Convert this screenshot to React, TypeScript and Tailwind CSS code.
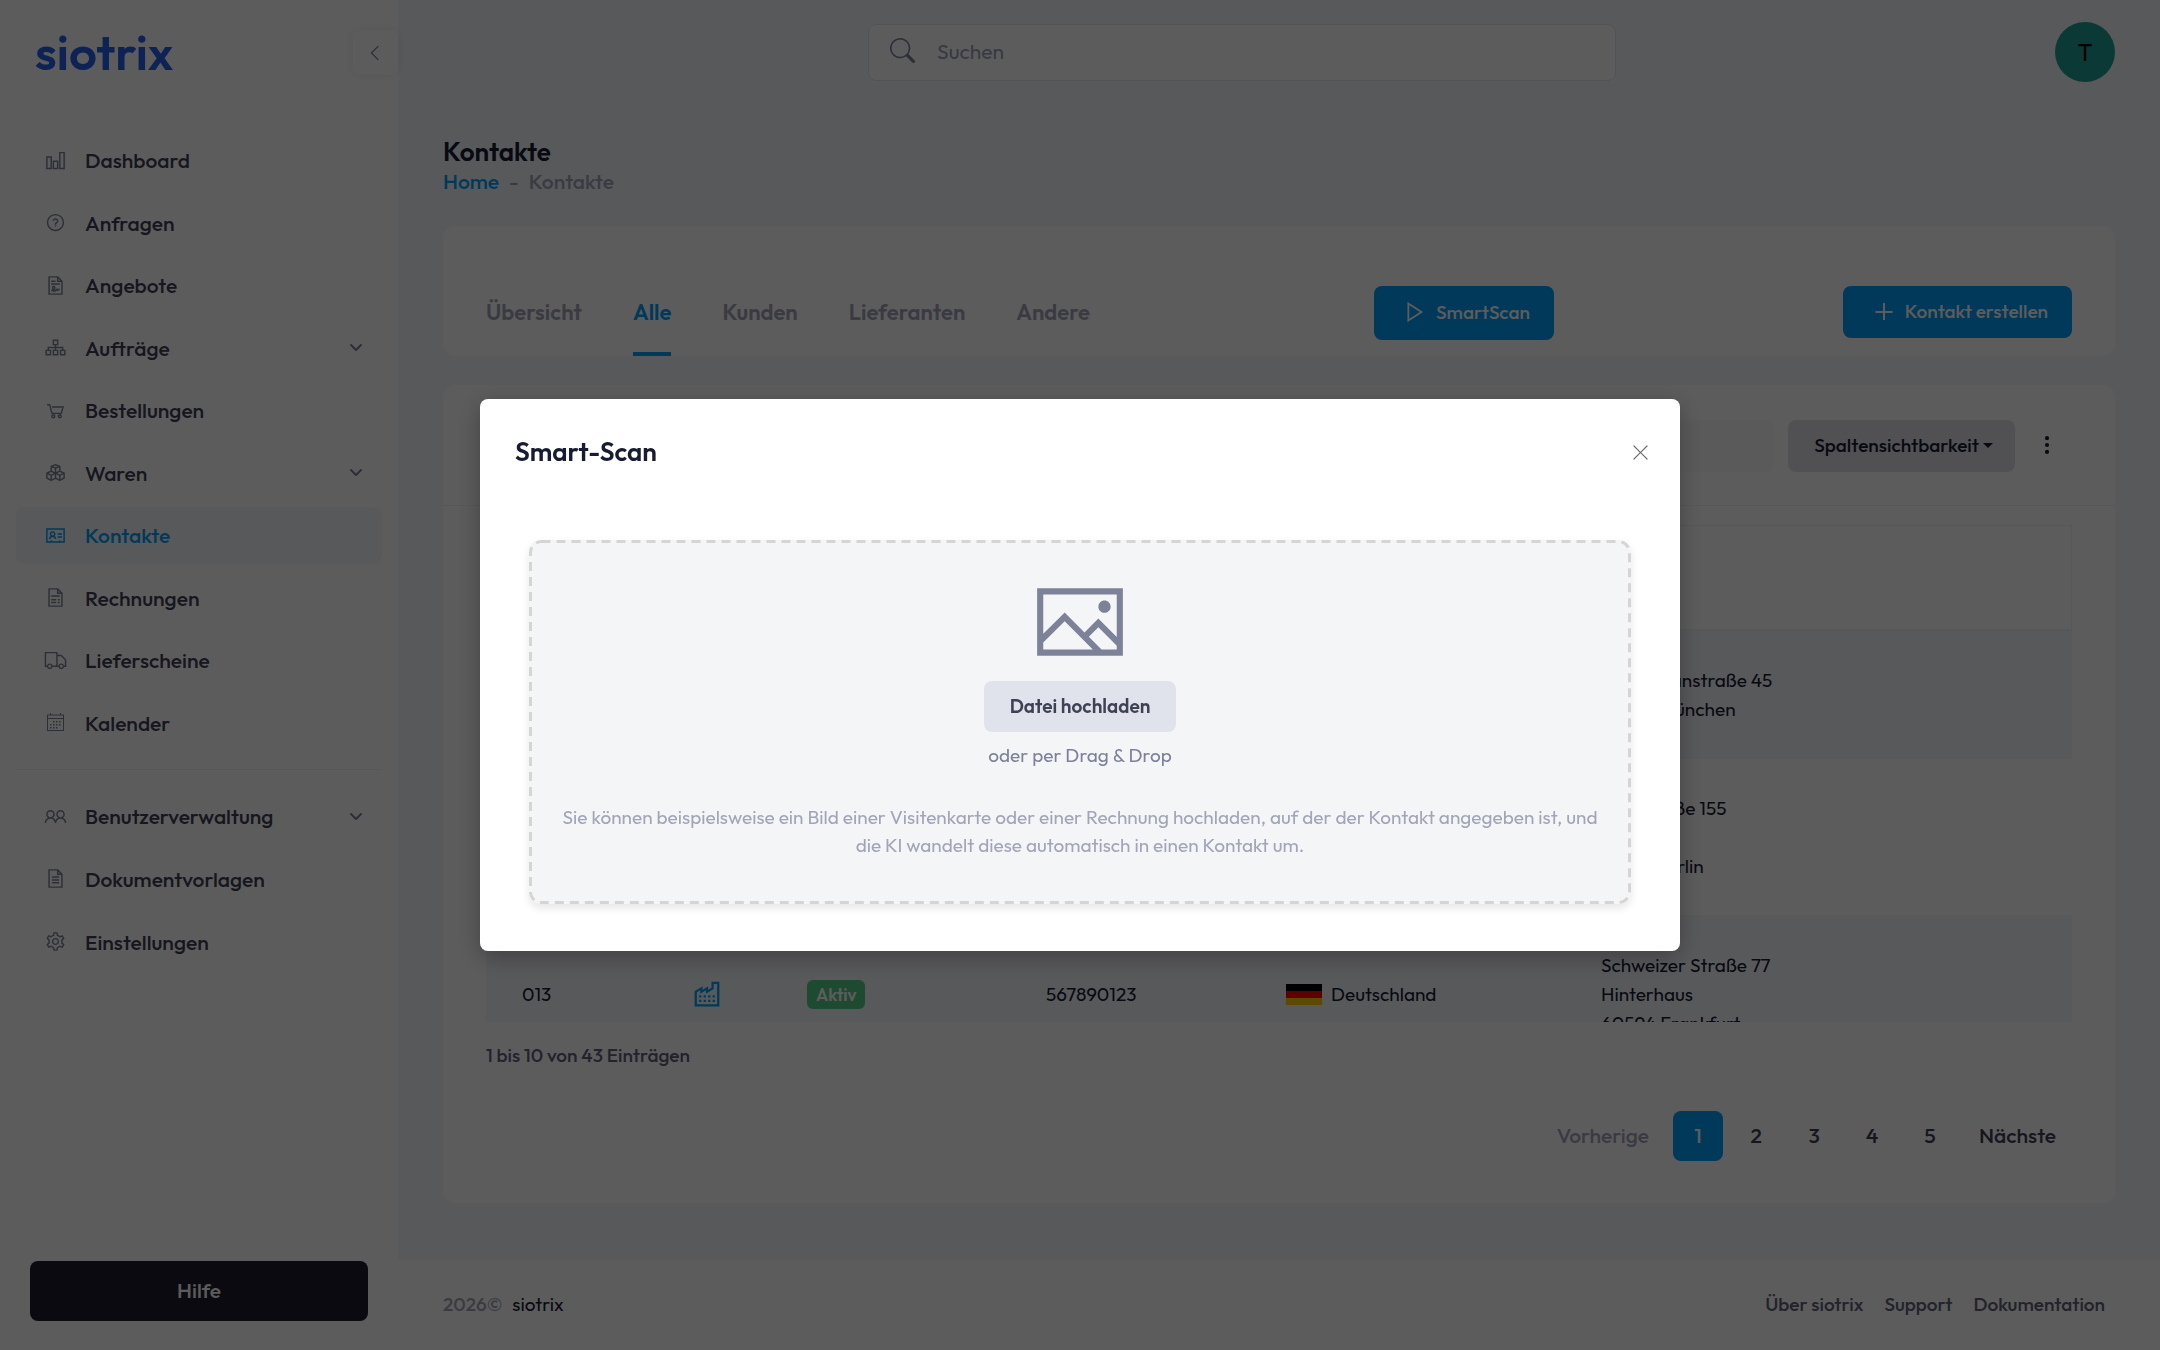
import type { ComponentType, ReactNode } from "react";
import { BsSearch, BsThreeDotsVertical, BsXLg } from "react-icons/bs";
import {
  LiaAddressCard,
  LiaAngleLeftSolid,
  LiaChartBarSolid,
  LiaCogSolid,
  LiaCubesSolid,
  LiaFileAltSolid,
  LiaFileContractSolid,
  LiaFileInvoiceSolid,
  LiaImage,
  LiaIndustrySolid,
  LiaPlaySolid,
  LiaQuestionCircle,
  LiaShoppingCartSolid,
  LiaSitemapSolid,
  LiaTruckSolid,
  LiaUserFriendsSolid,
} from "react-icons/lia";

type IconType = ComponentType<{ className?: string }>;
type Item = { label: string; icon: IconType; expandable?: boolean; active?: boolean };

function CalendarIcon({ className }: { className?: string }) {
  return (
    <svg viewBox="0 0 23 23" className={className} fill="currentColor">
      <path d="M6 2h1v1.500h9V2h1v1.500h3V20H3V3.500h3zM4 4.500V7h15V4.500zM4 8v11h15V8z" fillRule="evenodd" />
      <path d="M9 10h1.500v1.500H9zM12 10h1.500v1.500H12zM15 10h1.500v1.500H15zM6 13h1.500v1.500H6zM9 13h1.500v1.500H9zM12 13h1.500v1.500H12zM15 13h1.500v1.500H15zM6 16h1.500v1.500H6zM9 16h1.500v1.500H9zM12 16h1.500v1.500H12z" />
    </svg>
  );
}

const mainItems: Item[] = [
  { label: "Dashboard", icon: LiaChartBarSolid },
  { label: "Anfragen", icon: LiaQuestionCircle },
  { label: "Angebote", icon: LiaFileContractSolid },
  { label: "Aufträge", icon: LiaSitemapSolid, expandable: true },
  { label: "Bestellungen", icon: LiaShoppingCartSolid },
  { label: "Waren", icon: LiaCubesSolid, expandable: true },
  { label: "Kontakte", icon: LiaAddressCard, active: true },
  { label: "Rechnungen", icon: LiaFileInvoiceSolid },
  { label: "Lieferscheine", icon: LiaTruckSolid },
  { label: "Kalender", icon: CalendarIcon },
];

const adminItems: Item[] = [
  { label: "Benutzerverwaltung", icon: LiaUserFriendsSolid, expandable: true },
  { label: "Dokumentvorlagen", icon: LiaFileAltSolid },
  { label: "Einstellungen", icon: LiaCogSolid },
];

function ChevronDown() {
  return (
    <svg viewBox="0 0 14 9" className="h-[9px] w-[14px]" fill="none" stroke="#7e8299" strokeWidth="2" strokeLinecap="round" strokeLinejoin="round">
      <path d="M2 2l5 5 5-5" />
    </svg>
  );
}

function PlusIcon() {
  return (
    <svg viewBox="0 0 28 28" className="size-7" fill="none" stroke="currentColor" strokeWidth="2">
      <path d="M15 6v17M6.500 15h17" />
    </svg>
  );
}

function MenuItem({ item }: { item: Item }) {
  const Icon = item.icon;
  return (
    <li className="flex">
      <a
        href="#"
        className={
          "flex flex-1 items-center rounded-lg pr-[19px] pl-7 text-[21px] leading-8 font-medium " +
          (item.active ? "bg-[#f4f6fb] text-[#009ef7]" : "text-[#3f4254]")
        }
      >
        <Icon className={item.active ? "size-[23px] text-[#009ef7]" : "size-[23px] text-[#7e8299]"} />
        <span className="ml-[18px] flex-1">{item.label}</span>
        {item.expandable && <ChevronDown />}
      </a>
    </li>
  );
}

function Sidebar() {
  return (
    <aside className="flex w-[398px] shrink-0 flex-col bg-white">
      <div className="flex h-[130px] items-start justify-between pl-[35px]">
        <a href="#" className="mt-5 text-[49px] leading-[64px] font-semibold text-[#2563eb]">siotrix</a>
        <button aria-label="Menü einklappen" className="mt-[30px] flex size-[45px] items-center justify-center rounded-lg bg-white text-[#7e8299] shadow-[0_0_10px_rgba(0,0,0,0.08)]">
          <LiaAngleLeftSolid className="size-5" />
        </button>
      </div>
      <nav className="flex flex-col px-4">
        <ul className="mt-0.5 grid min-h-[619px] auto-rows-fr gap-1.5">
          {mainItems.map((item) => (
            <MenuItem key={item.label} item={item} />
          ))}
        </ul>
        <hr className="mt-[18px] border-[#eff2f5]" />
        <ul className="mt-[18px] grid min-h-[182px] auto-rows-fr gap-1.5">
          {adminItems.map((item) => (
            <MenuItem key={item.label} item={item} />
          ))}
        </ul>
      </nav>
      <button className="mx-[30px] mt-auto mb-[29px] h-[60px] rounded-lg bg-[#1e1e2d] text-[21px] font-medium text-white">Hilfe</button>
    </aside>
  );
}

function TopBar() {
  return (
    <header className="flex h-[104px] items-center pr-[45px] pl-[470px]">
      <label className="flex h-[57px] w-full max-w-[748px] items-center rounded-lg border border-[#e4e6ef] bg-white pl-[21px]">
        <BsSearch className="mb-1 size-[25px] text-[#7e8299]" />
        <input aria-label="Suchen" placeholder="Suchen" className="ml-[22px] flex-1 text-[21px] outline-none placeholder:text-[#99a1b7]" />
      </label>
      <button aria-label="Profil" className="ml-auto size-[60px] rounded-full bg-[#1fa095] text-2xl text-black">T</button>
    </header>
  );
}

const tabs = ["Übersicht", "Alle", "Kunden", "Lieferanten", "Andere"];

function TabCard() {
  return (
    <section className="flex h-[130px] items-end rounded-xl bg-white px-[43px]">
      <nav className="flex gap-[51px] text-[22px] leading-8 font-semibold">
        {tabs.map((tab) => (
          <a
            key={tab}
            href="#"
            className={
              "border-b-4 pb-6 " +
              (tab === "Alle" ? "border-[#009ef7] text-[#009ef7]" : "border-transparent text-[#a1a5b7]")
            }
          >
            {tab}
          </a>
        ))}
      </nav>
      <div className="ml-auto flex w-[698px] items-start justify-between pb-4">
        <button className="flex h-[54px] items-center gap-[7px] rounded-lg bg-[#009ef7] pr-6 pb-0.5 pl-[25px] text-[19px] font-medium text-white">
          <LiaPlaySolid className="size-[30px]" />
          SmartScan
        </button>
        <button className="flex h-[52px] items-center gap-2 rounded-lg bg-[#009ef7] pr-6 pb-0.5 pl-[26px] text-[19px] font-medium text-white">
          <PlusIcon />
          Kontakt erstellen
        </button>
      </div>
    </section>
  );
}

function Cell({ children, first }: { children?: ReactNode; first?: boolean }) {
  return <td className={first ? "pl-9" : ""}>{children}</td>;
}

function GermanFlag() {
  return (
    <svg viewBox="0 0 36 21" className="h-[21px] w-9">
      <rect width="36" height="7" fill="#000" />
      <rect y="7" width="36" height="7" fill="#f00" />
      <rect y="14" width="36" height="7" fill="#ffce00" />
    </svg>
  );
}

function ContactTable() {
  return (
    <div className="h-[497px] overflow-hidden">
      <table className="w-full table-fixed border-collapse text-left text-[19px] leading-[29px] text-[#181c32]">
        <colgroup>
          <col className="w-[207px]" />
          <col className="w-[114px]" />
          <col className="w-[239px]" />
          <col className="w-[240px]" />
          <col className="w-[315px]" />
          <col />
        </colgroup>
        <thead className="outline outline-[#eff2f5] -outline-offset-1">
          <tr className="h-[105px] border-b-2 border-[#eff2f5]">
            <th className="pl-9 font-medium">Nr.</th>
            <th className="font-medium">Typ</th>
            <th className="font-medium">Status</th>
            <th className="font-medium">Telefon</th>
            <th className="font-medium">Land</th>
            <th className="font-medium">Ort</th>
          </tr>
        </thead>
        <tbody>
          <tr className="h-[129px] bg-[#f4f6fb]">
            <Cell first />
            <Cell />
            <Cell />
            <Cell />
            <Cell />
            <Cell>
              Maximilianstraße 45
              <br />
              80539 München
            </Cell>
          </tr>
          <tr className="h-[156px]">
            <Cell first />
            <Cell />
            <Cell />
            <Cell />
            <Cell />
            <Cell>
              Kantstraße 155
              <br />
              2. OG
              <br />
              10623 Berlin
            </Cell>
          </tr>
          <tr className="h-[158px] bg-[#f4f6fb]">
            <Cell first>013</Cell>
            <Cell>
              <LiaIndustrySolid className="-ml-1 size-9 text-[#009ef7]" />
            </Cell>
            <Cell>
              <span className="inline-block rounded-md bg-[#50cd89] px-[9px] text-[17px] font-semibold text-white">Aktiv</span>
            </Cell>
            <Cell>567890123</Cell>
            <Cell>
              <span className="flex items-center gap-[9px]">
                <GermanFlag />
                Deutschland
              </span>
            </Cell>
            <Cell>
              Schweizer Straße 77
              <br />
              Hinterhaus
              <br />
              60594 Frankfurt
            </Cell>
          </tr>
        </tbody>
      </table>
    </div>
  );
}

function Pagination() {
  return (
    <nav aria-label="Seiten" className="mt-[41px] flex h-[50px] items-stretch justify-end gap-2 text-[21px] font-medium text-[#3f4254]">
      <button disabled className="px-4 text-[#a1a5b7]">Vorherige</button>
      <button className="w-[50px] rounded-lg bg-[#009ef7] text-white">1</button>
      {["2", "3", "4", "5"].map((n) => (
        <button key={n} className="w-[50px]">{n}</button>
      ))}
      <button className="px-4">Nächste</button>
    </nav>
  );
}

function TableCard() {
  return (
    <section className="mt-[29px] rounded-xl bg-white pb-[42px]">
      <div className="flex h-[121px] items-start justify-end border-b border-[#eff2f5] pt-[35px] pr-[57px]">
        <input aria-label="Kontakte durchsuchen" className="h-[52px] w-[360px] rounded-lg bg-[#fafafa]" />
        <button className="ml-3.5 flex h-[52px] items-center gap-1 rounded-lg bg-[#dfe1e7] pr-[22px] pb-0.5 pl-[26px] text-[19px] font-medium text-[#181c32]">
          Spaltensichtbarkeit
          <span className="border-x-[5px] border-t-[5px] border-x-transparent border-t-[#181c32]" />
        </button>
        <button aria-label="Mehr" className="ml-[21px] flex h-[50px] w-[22px] items-center justify-center">
          <BsThreeDotsVertical className="size-[22px]" />
        </button>
      </div>
      <div className="px-[43px] pt-[19px]">
        <ContactTable />
        <p className="mt-[18px] text-[19px] leading-[30px] font-medium text-[#5e6278]">1 bis 10 von 43 Einträgen</p>
        <Pagination />
      </div>
    </section>
  );
}

function Footer() {
  return (
    <footer className="flex h-[90px] items-center bg-white pr-[55px] pb-0.5 pl-[45px] text-[19px] font-medium text-[#5e6278]">
      <span className="text-[#a1a5b7]">2026©</span>
      <a href="#" className="ml-2.5 font-normal text-[#181c32]">siotrix</a>
      <nav className="ml-auto flex gap-[21px]">
        <a href="#">Über siotrix</a>
        <a href="#">Support</a>
        <a href="#">Dokumentation</a>
      </nav>
    </footer>
  );
}

function DropZone() {
  return (
    <div className="relative mx-[49px] mt-[71px] mb-[47px] flex flex-col items-center rounded-xl bg-[#f4f5f7] pt-[33px] pb-[45px] shadow-[0_4px_8px_rgba(0,0,0,0.1)]">
      <svg aria-hidden="true" className="pointer-events-none absolute inset-0 size-full" fill="none" stroke="#d5d5d5" strokeWidth="3" strokeDasharray="9 6">
        <rect x="1.5" y="1.5" rx="11" className="h-[calc(100%-3px)] w-[calc(100%-3px)]" />
      </svg>
      <LiaImage className="size-[98px] text-[#7e8299]" />
      <button className="mt-2.5 h-[51px] rounded-lg bg-[#e0e3eb] px-[26px] text-[19px] font-semibold text-[#3f4254]">Datei hochladen</button>
      <p className="mt-[9px] text-[19px] leading-7 text-[#7e8299]">oder per Drag &amp; Drop</p>
      <p className="mt-[34px] max-w-[1044px] text-center text-[19px] leading-7 text-[#a1a5b7]">
        Sie können beispielsweise ein Bild einer Visitenkarte oder einer Rechnung hochladen, auf der der Kontakt angegeben ist, und die KI wandelt diese automatisch in einen Kontakt um.
      </p>
    </div>
  );
}

function SmartScanDialog() {
  return (
    <div className="fixed inset-0 flex items-center justify-center bg-black/64">
      <div role="dialog" aria-modal="true" aria-labelledby="smart-scan-title" className="w-full max-w-[1200px] rounded-lg bg-white shadow-[0_6px_24px_rgba(0,0,0,0.3)]">
        <div className="flex items-center justify-between px-[35px] pt-9">
          <h2 id="smart-scan-title" className="text-[26px] leading-[34px] font-semibold text-[#181c32]">Smart-Scan</h2>
          <button aria-label="Schließen" className="-mr-2.5 flex size-[30px] items-center justify-center text-[#6f6f6f]">
            <BsXLg className="size-[19px]" />
          </button>
        </div>
        <DropZone />
      </div>
    </div>
  );
}

export default function App() {
  return (
    <div className="flex min-h-screen bg-[#f4f6fb] font-['Outfit','Lato',sans-serif] text-[#181c32]">
      <Sidebar />
      <div className="flex min-w-0 flex-1 flex-col">
        <TopBar />
        <main className="flex-1 px-[45px] pt-8">
          <h1 className="text-[26px] leading-8 font-semibold">Kontakte</h1>
          <nav aria-label="Brotkrumen" className="mb-8 flex gap-2.5 text-[21px] leading-[26px] font-medium text-[#a1a5b7]">
            <a href="#" className="text-[#009ef7]">Home</a>
            <span>-</span>
            <span>Kontakte</span>
          </nav>
          <TabCard />
          <TableCard />
        </main>
        <Footer />
      </div>
      <SmartScanDialog />
    </div>
  );
}
